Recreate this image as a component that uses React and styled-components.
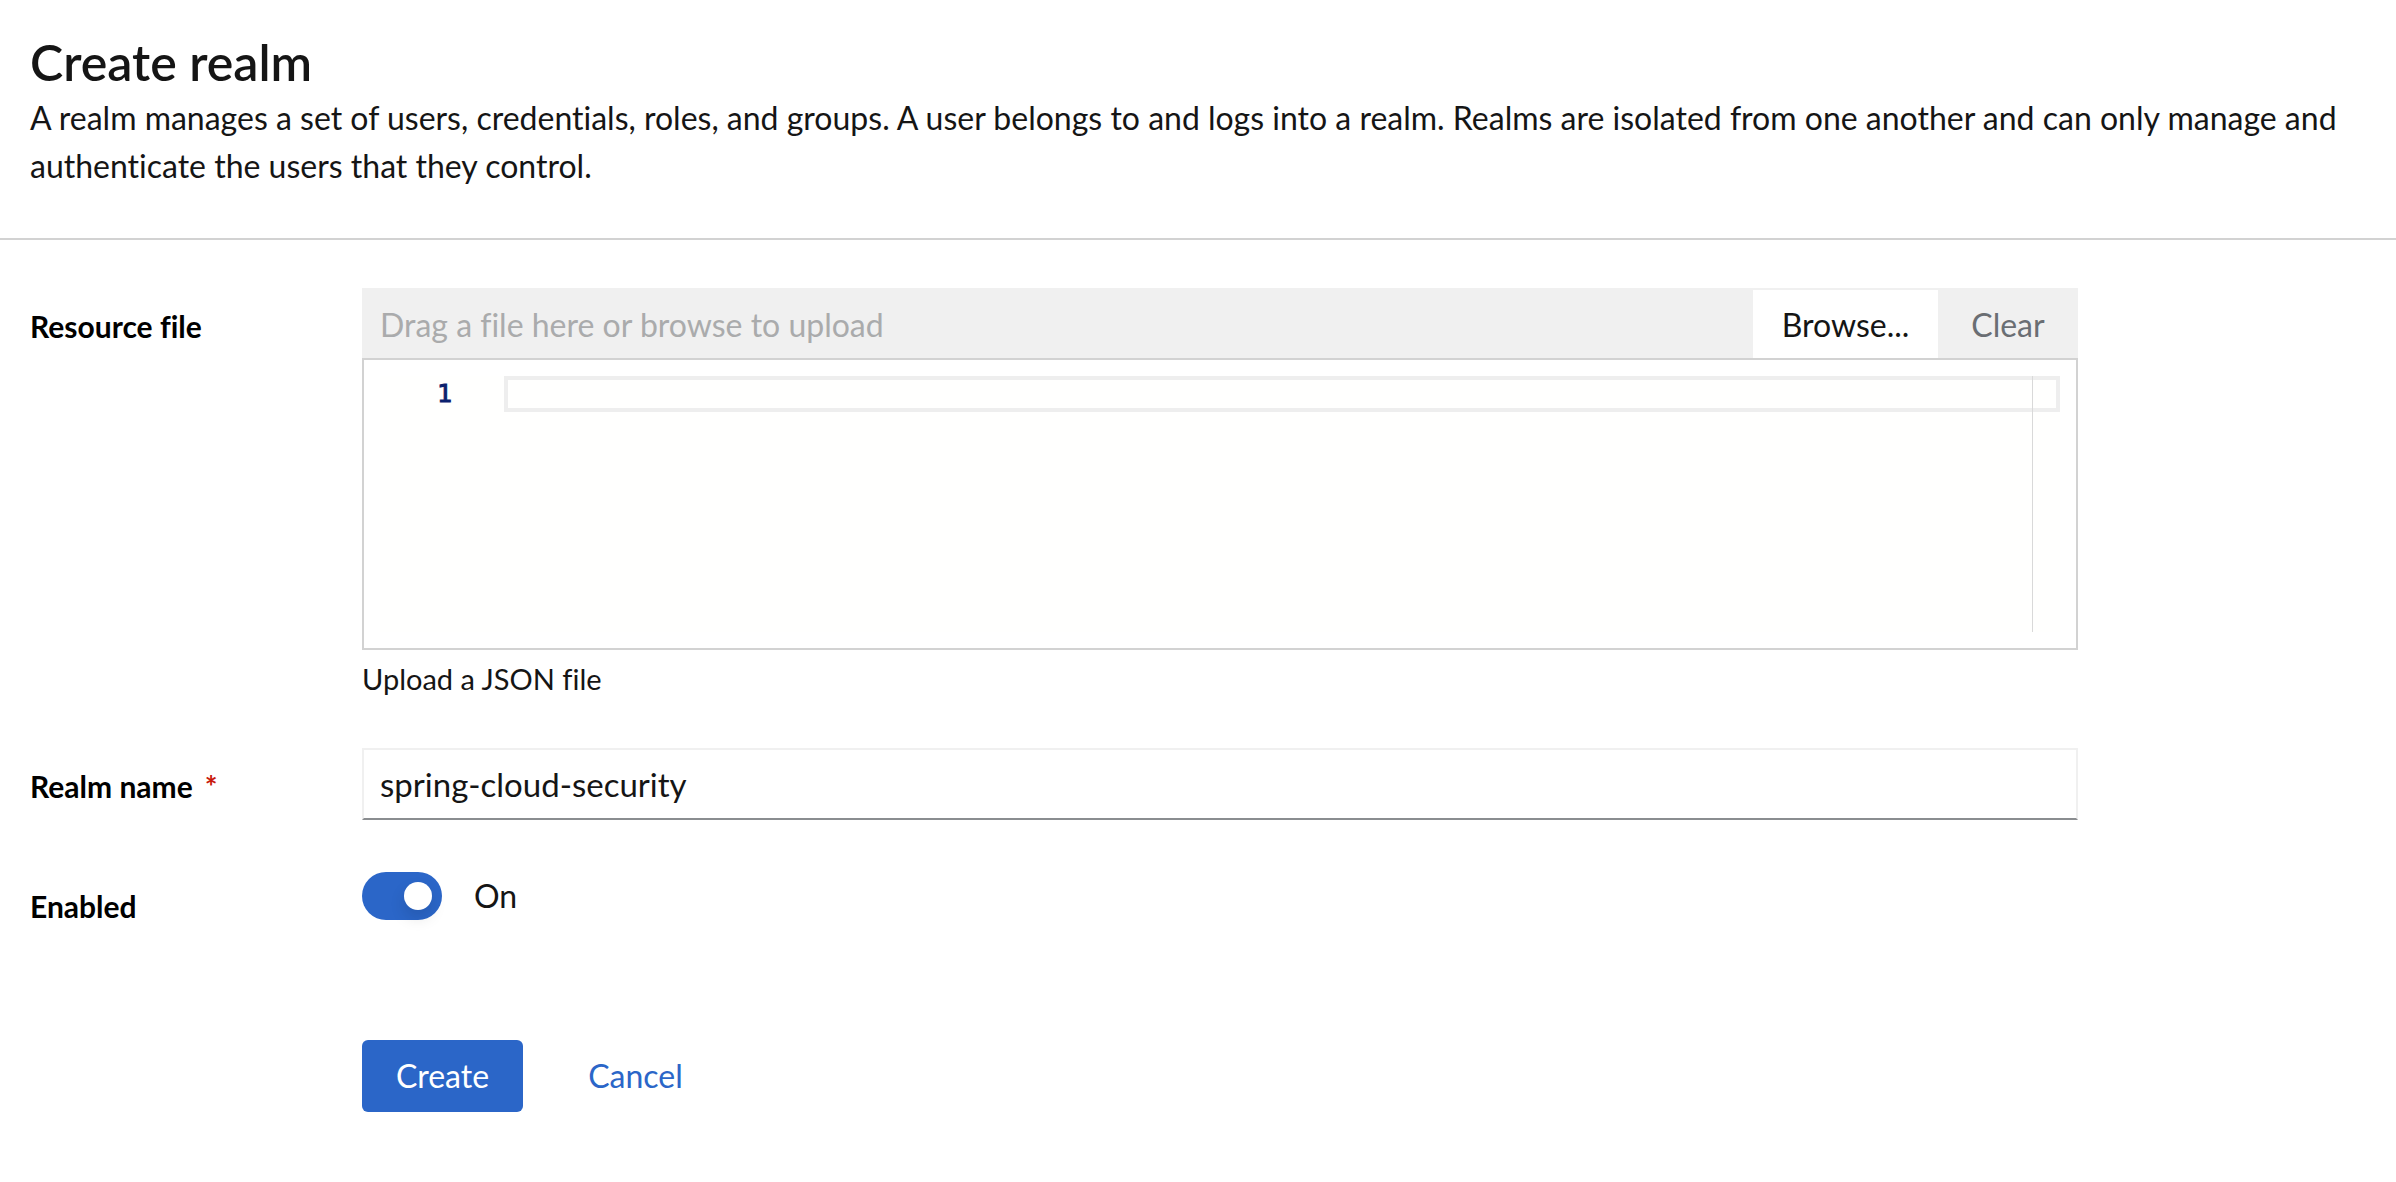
import React, { useState } from "react";
import styled, { createGlobalStyle } from "styled-components";

const Global = createGlobalStyle`
  *, *::before, *::after { box-sizing: border-box; }
  body {
    margin: 0;
    background: #fff;
    color: #151515;
    font: 400 32px/48px Lato, "Open Sans", sans-serif;
    font-variant-ligatures: none;
  }
  button, input, textarea {
    margin: 0;
    border-radius: 0;
    color: inherit;
    font: inherit;
    font-variant-ligatures: none;
  }
`;

const Header = styled.header`
  padding: 30px 24px 48px 30px;
  border-bottom: 2px solid #d2d2d2;
`;

const Title = styled.h1`
  margin: 0;
  font-size: 50px;
  line-height: 64px;
  font-weight: 600;
`;

const Intro = styled.p`
  margin: 0;
`;

const Form = styled.form`
  display: flex;
  flex-direction: column;
  max-width: 2108px;
  padding: 48px 30px;
`;

const Row = styled.div`
  display: grid;
  grid-template-columns: 332px minmax(0, 1fr);
  align-items: start;
  margin-bottom: ${(p) => p.$gap || 0}px;
`;

const Label = styled.label`
  padding-top: ${(p) => (p.$compact ? 14 : 18)}px;
  color: #000;
  font-size: 30px;
  line-height: 40px;
  font-weight: 700;
`;

const Required = styled.span`
  margin-left: 12px;
  color: #c9190b;
`;

const UploadBar = styled.div`
  display: flex;
  height: 70px;
  background: #f0f0f0;
`;

const FileName = styled.input`
  flex: 1;
  min-width: 0;
  padding: 4px 18px 0;
  border: 0;
  background: transparent;
  outline: none;
  &::placeholder { color: #aaabac; opacity: 1; }
`;

const BarButton = styled.button`
  width: ${(p) => p.$width}px;
  padding: 2px 0 0;
  border: 0;
  border-top: 2px solid #f0f0f0;
  background: ${(p) => (p.$muted ? "#f0f0f0" : "#fff")};
  color: ${(p) => (p.$muted ? "#6a6e73" : "#151515")};
`;

const Editor = styled.div`
  display: flex;
  height: 292px;
  padding: 16px;
  border: 2px solid #d2d2d2;
`;

const Gutter = styled.div`
  width: 124px;
  padding-right: 52px;
  background: #fffffe;
  color: #0b216f;
  font: 400 25px/36px "DejaVu Sans Mono", monospace;
  -webkit-text-stroke: 1px #0b216f;
  text-align: right;
`;

const CodeArea = styled.div`
  position: relative;
  flex: 1;
  min-width: 0;
  background: #fffffe;
  &::after {
    content: "";
    position: absolute;
    top: 0;
    right: 0;
    bottom: 0;
    width: 28px;
    border-left: 1px solid #d9d9d9;
    pointer-events: none;
  }
`;

const Code = styled.textarea`
  display: block;
  width: 100%;
  height: 36px;
  padding: 0 4px;
  border: 4px solid #eee;
  background: transparent;
  font: 24px/28px "DejaVu Sans Mono", monospace;
  resize: none;
  outline: none;
  overflow: hidden;
`;

const Helper = styled.div`
  padding-top: 8px;
  font-size: 29px;
  line-height: 42px;
`;

const TextInput = styled.input`
  width: 100%;
  height: 72px;
  padding: 0 16px;
  border: 2px solid #f0f0f0;
  border-bottom-color: #8a8d90;
  background: #fff;
  outline: none;
  font-size: 33px;
`;

const SwitchLabel = styled.label`
  display: flex;
  align-items: center;
  gap: 32px;
  width: max-content;
`;

const Switch = styled.input`
  appearance: none;
  width: 80px;
  height: 48px;
  padding: 10px;
  border-radius: 24px;
  background: #8a8d90;
  &::before {
    content: "";
    display: block;
    width: 28px;
    height: 28px;
    border-radius: 50%;
    background: #fff;
    box-shadow: 0 8px 16px rgba(3, 3, 3, 0.12);
  }
  &:checked { background: #2b66c8; }
  &:checked::before { margin-left: 32px; }
`;

const Actions = styled.div`
  display: flex;
  gap: 32px;
  padding-left: 332px;
`;

const Button = styled.button`
  height: 72px;
  min-width: 161px;
  padding: 0 32px;
  border: 0;
  border-radius: 6px;
  background: ${(p) => (p.$primary ? "#2b66c8" : "transparent")};
  color: ${(p) => (p.$primary ? "#fff" : "#2b66c8")};
`;

export default function App() {
  const [name, setName] = useState("spring-cloud-security");
  const [enabled, setEnabled] = useState(true);
  const [json, setJson] = useState("");

  return (
    <>
      <Global />
      <Header>
        <Title>Create realm</Title>
        <Intro>
          A realm manages a set of users, credentials, roles, and groups. A user belongs to and logs
          into a realm. Realms are isolated from one another and can only manage and authenticate
          the users that they control.
        </Intro>
      </Header>
      <Form onSubmit={(e) => e.preventDefault()}>
        <Row $gap={48}>
          <Label htmlFor="resource">Resource file</Label>
          <div>
            <UploadBar>
              <FileName id="resource" readOnly placeholder="Drag a file here or browse to upload" />
              <BarButton type="button" $width={185}>Browse...</BarButton>
              <BarButton type="button" $width={140} $muted onClick={() => setJson("")}>Clear</BarButton>
            </UploadBar>
            <Editor>
              <Gutter>1</Gutter>
              <CodeArea>
                <Code aria-label="File contents" value={json} onChange={(e) => setJson(e.target.value)} />
              </CodeArea>
            </Editor>
            <Helper>Upload a JSON file</Helper>
          </div>
        </Row>
        <Row $gap={52}>
          <Label htmlFor="realm-name">
            Realm name<Required>*</Required>
          </Label>
          <TextInput id="realm-name" value={name} onChange={(e) => setName(e.target.value)} />
        </Row>
        <Row $gap={114}>
          <Label htmlFor="enabled" $compact>Enabled</Label>
          <SwitchLabel>
            <Switch id="enabled" type="checkbox" role="switch" checked={enabled} onChange={(e) => setEnabled(e.target.checked)} />
            {enabled ? "On" : "Off"}
          </SwitchLabel>
        </Row>
        <Actions>
          <Button type="submit" $primary>Create</Button>
          <Button type="button">Cancel</Button>
        </Actions>
      </Form>
    </>
  );
}
